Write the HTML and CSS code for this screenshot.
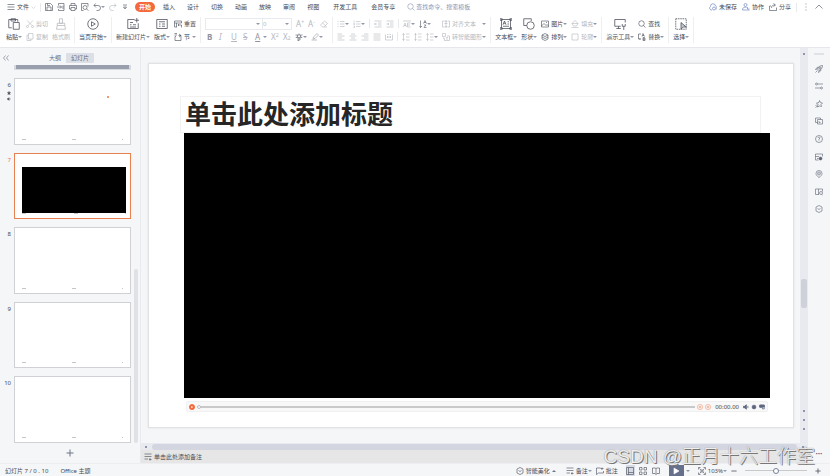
FILE: index.html
```html
<!DOCTYPE html>
<html lang="zh-CN">
<head>
    <meta charset="UTF-8">
    <meta name="viewport" content="width=device-width, initial-scale=1.0">
    <title>演示文稿</title>
    <link rel="stylesheet" href="styles.css">
</head>
<body>
    <!-- 图标 -->
    <svg class="sprite" aria-hidden="true">
        <symbol id="menu" viewBox="0 0 16 16"><path d="M1 3h14M1 8h14M1 13h14"/></symbol>
        <symbol id="chevron-down" viewBox="0 0 16 16"><path d="M2 5l6 6 6-6"/></symbol>
        <symbol id="chevron-up" viewBox="0 0 16 16"><path d="M1 11l7-7 7 7"/></symbol>
        <symbol id="save" viewBox="0 0 16 16"><path d="M1 1h10l4 4v10H1zM4 15V8h8v7M5 1v4h5"/></symbol>
        <symbol id="export" viewBox="0 0 16 16"><path d="M3 5V1h11v14H3v-3M0 8h9M6 5l3 3-3 3M12 5v7"/></symbol>
        <symbol id="print" viewBox="0 0 16 16"><path d="M4 5V1h8v4M4 12H1V5h14v7h-3M4 9h8v6H4z"/></symbol>
        <symbol id="preview" viewBox="0 0 16 16"><path d="M5 15H1V1h13v6M11 12l4 3"/><circle cx="8" cy="9" r="4"/></symbol>
        <symbol id="undo" viewBox="0 0 16 16"><path d="M5 1L2 5l4 4M2 5h8a5 5 0 0 1 0 10H7"/></symbol>
        <symbol id="redo" viewBox="0 0 16 16"><path d="M11 1l3 4-4 4M14 5H6a5 5 0 0 0 0 10h3"/></symbol>
        <symbol id="more-down" viewBox="0 0 16 16"><path d="M4 4h8M5 8h6l-3 4z"/></symbol>
        <symbol id="search" viewBox="0 0 16 16"><circle cx="7" cy="7" r="5.5"/><path d="M11 11l4 4"/></symbol>
        <symbol id="cloud" viewBox="0 0 16 16"><path d="M6 14H4a4 4 0 0 1-1-7 5 5 0 0 1 10-1 4 4 0 0 1 1 7"/><circle cx="10" cy="11" r="3"/></symbol>
        <symbol id="team" viewBox="0 0 16 16"><circle cx="7" cy="4" r="3"/><path d="M1 14c0-6 5-6 8-5M1 14h14M11 8v4h4"/></symbol>
        <symbol id="share" viewBox="0 0 16 16"><path d="M4 6H1v9h14V9M5 10c0-5 3-6 7-6M9 1l4 3-4 3"/></symbol>
        <symbol id="dots" viewBox="0 0 16 16"><path d="M8 1v2M8 7v2M8 13v2"/></symbol>
        <symbol id="paste" viewBox="0 0 16 16"><path d="M5 13H1V2h12v3M4 3V1h6v3H4zM7 6h8v9H7z"/></symbol>
        <symbol id="cut" viewBox="0 0 16 16"><path d="M2 1l10 10M14 1L4 11"/><circle cx="3" cy="13" r="2"/><circle cx="13" cy="13" r="2"/></symbol>
        <symbol id="copy" viewBox="0 0 16 16"><path d="M5 1h9v11H5zM5 4H2v11h8v-3"/></symbol>
        <symbol id="brush" viewBox="0 0 16 16"><path d="M6 1h4v6H6zM3 7h10v3H3zM3 10l-1 5h12l-1-5"/></symbol>
        <symbol id="play" viewBox="0 0 16 16"><circle cx="8" cy="8" r="7"/><path d="M6 5l5 3-5 3z"/></symbol>
        <symbol id="new-slide" viewBox="0 0 16 16"><path d="M10 2H1v12h14V7M13 0v6M10 3h6M4 6h4M4 9h2M8 9h4M4 12h8"/></symbol>
        <symbol id="layout" viewBox="0 0 16 16"><path d="M1 2h14v12H1zM4 5h8M4 8h2M8 8h4M4 11h2M8 11h4"/></symbol>
        <symbol id="reset" viewBox="0 0 16 16"><path d="M15 6V2H1v12h5M1 6h14M5 6v8M8 10h7v5M10 8l-2 2 2 2"/></symbol>
        <symbol id="section" viewBox="0 0 16 16"><path d="M1 1h5M1 4h5M4 7H2v8h12V5H9M10 2l4 3-4 3"/></symbol>
        <symbol id="eraser" viewBox="0 0 16 16"><path d="M9 2l6 5-7 7H5l-4-4zM5 6l6 5M8 14h6"/></symbol>
        <symbol id="phonetic" viewBox="0 0 16 16"><path d="M8 1v3M1 4h14M5 4v4M11 4v4M2 9h12M4 7L2 9M12 7l2 2M4 12h8M8 9v7M5 15h3"/></symbol>
        <symbol id="highlight" viewBox="0 0 16 16"><path d="M12 1l3 3-7 7-4 1 1-4zM1 14h11"/></symbol>
        <symbol id="bullets" viewBox="0 0 16 16"><path d="M1 3h2M1 8h2M1 13h2M6 3h9M6 8h9M6 13h9"/></symbol>
        <symbol id="numbers" viewBox="0 0 16 16"><path d="M2 1v4M1 7h2v2H1M1 12h2v3H1M6 3h9M6 8h9M6 13h9"/></symbol>
        <symbol id="outdent" viewBox="0 0 16 16"><path d="M1 2h14M8 6h7M8 10h7M1 14h14M6 8H1M3 6L1 8l2 2"/></symbol>
        <symbol id="indent" viewBox="0 0 16 16"><path d="M1 2h14M8 6h7M8 10h7M1 14h14M1 8h5M4 6l2 2-2 2"/></symbol>
        <symbol id="spread" viewBox="0 0 16 16"><path d="M0 2h16M1 14l3-8 3 8M2 11h4M9 6h6M9 10h5M9 14h6M9 6v8"/></symbol>
        <symbol id="sort" viewBox="0 0 16 16"><path d="M3 1v14M1 12l2 3 3-3M9 7l3-6 3 6M10 5h4M10 10h4l-4 5h5"/></symbol>
        <symbol id="align-text" viewBox="0 0 16 16"><path d="M5 2H1v12h4M11 2h4v12h-4M8 1v14M5 7h6M6 4l2-3 2 3M6 12l2 3 2-3"/></symbol>
        <symbol id="left" viewBox="0 0 16 16"><path d="M1 2h9M1 6h14M1 10h9M1 14h14"/></symbol>
        <symbol id="center" viewBox="0 0 16 16"><path d="M4 2h8M1 6h14M4 10h8M1 14h14"/></symbol>
        <symbol id="right" viewBox="0 0 16 16"><path d="M6 2h9M1 6h14M6 10h9M1 14h14"/></symbol>
        <symbol id="justify" viewBox="0 0 16 16"><path d="M1 2h14M1 6h14M1 10h14M1 14h14"/></symbol>
        <symbol id="distribute" viewBox="0 0 16 16"><path d="M1 3v11h14V3M4 3h3M9 3h3M4 8h8M6 6L4 8l2 2M10 6l2 2-2 2"/></symbol>
        <symbol id="line-gap" viewBox="0 0 16 16"><path d="M3 1v14M1 4l2-3 2 3M1 12l2 3 2-3M8 2h7M8 8h7M8 14h7"/></symbol>
        <symbol id="smart" viewBox="0 0 16 16"><path d="M1 1h6v6H1zM5 10v5h10V6h-5M8 9h4M8 12h4M3 9v3"/></symbol>
        <symbol id="textbox" viewBox="0 0 16 16"><path d="M2 2h12v12H2zM0 1h3v2H0zM13 1h3v2h-3zM0 13h3v2H0zM13 13h3v2h-3zM4 9l2-5 2 5M5 7h2M10 5h2M10 8h2M4 11h8"/></symbol>
        <symbol id="shapes" viewBox="0 0 16 16"><path d="M5 10H1V1h10v3"/><circle cx="10" cy="10" r="5"/></symbol>
        <symbol id="picture" viewBox="0 0 16 16"><path d="M1 2h14v12H1zM1 12l5-5 4 4 2-2 3 3M10 5h2"/></symbol>
        <symbol id="arrange" viewBox="0 0 16 16"><path d="M8 1l6 3-6 3-6-3zM2 8l6 3 6-3M2 12l6 3 6-3M2 4v8M14 4v8"/></symbol>
        <symbol id="fill" viewBox="0 0 16 16"><path d="M8 1l6 6-3 5H5L2 7zM2 7h12M1 15h14"/></symbol>
        <symbol id="outline" viewBox="0 0 16 16"><path d="M2 2h12v12H2z"/></symbol>
        <symbol id="screen" viewBox="0 0 16 16"><path d="M9 11H1V2h14v4M6 11v3M3 14h6M11 8v3h4V8M13 11v5"/></symbol>
        <symbol id="replace" viewBox="0 0 16 16"><path d="M6 2H1v10h4M3 10l2 2-2 2M8 7l2-6 3 6M9 5h3M10 9h3l1 2-1 1h-3zM10 12h4v3h-4z"/></symbol>
        <symbol id="select" viewBox="0 0 16 16"><path d="M1 1h14v14H1z" stroke-dasharray="2 1"/><path d="M8 6v9l3-3h4z" fill="#c4c8d0"/></symbol>
        <symbol id="collapse" viewBox="0 0 16 16"><path d="M7 3L3 8l4 5M13 3L9 8l4 5"/></symbol>
        <symbol id="plus" viewBox="0 0 16 16"><path d="M8 1v14M1 8h14"/></symbol>
        <symbol id="minus" viewBox="0 0 16 16"><path d="M1 8h14"/></symbol>
        <symbol id="star" viewBox="0 0 16 16"><path d="M8 1l2 5h5l-4 3 2 6-5-3-5 3 2-6-4-3h5z" fill="currentColor"/></symbol>
        <symbol id="speaker" viewBox="0 0 16 16"><path d="M1 6h3l5-4v12l-5-4H1z" fill="currentColor"/><path d="M13 5v6"/></symbol>
        <symbol id="rocket" viewBox="0 0 16 16"><path d="M5 8c2-5 6-7 10-7 0 4-2 8-7 10zM5 8L1 9l3-4 3-1M8 11l-1 4 4-3 1-3M1 15l4-4"/><circle cx="10" cy="6" r="2"/></symbol>
        <symbol id="sliders" viewBox="0 0 16 16"><path d="M5 4h11M0 12h11"/><circle cx="3" cy="4" r="2"/><circle cx="13" cy="12" r="2"/></symbol>
        <symbol id="motion" viewBox="0 0 16 16"><path d="M9 1l2 4 4 1-3 3 1 4-4-1-4 2 1-5-3-3 5-1zM1 12l3-3M1 15l4-3"/></symbol>
        <symbol id="windows" viewBox="0 0 16 16"><path d="M5 5h10v9H5zM5 11H1V2h10v3M8 8v3h3"/></symbol>
        <symbol id="help" viewBox="0 0 16 16"><circle cx="8" cy="8" r="7"/><path d="M6 6c0-3 5-2 4 0L8 8v2M8 11v1"/></symbol>
        <symbol id="material" viewBox="0 0 16 16"><path d="M7 14H1V2h14v5M1 7h7M4 11h3"/><circle cx="11" cy="11" r="3" fill="currentColor"/></symbol>
        <symbol id="pin" viewBox="0 0 16 16"><path d="M8 15c-4-3-6-5-6-8a6 6 0 0 1 12 0c0 3-2 5-6 8z"/><circle cx="8" cy="7" r="3"/><path d="M7 7h2"/></symbol>
        <symbol id="book-search" viewBox="0 0 16 16"><path d="M8 13H1V2h6v11M7 2h8v5M14 13l2 2"/><circle cx="12" cy="10" r="3"/></symbol>
        <symbol id="cube" viewBox="0 0 16 16"><path d="M8 1l6 3v8l-6 3-6-3V4zM5 7l3 2 3-2"/></symbol>
        <symbol id="notes" viewBox="0 0 16 16"><path d="M1 2h14M1 7h14M1 12h7M12 10v5M10 13h5"/></symbol>
        <symbol id="comment" viewBox="0 0 16 16"><path d="M9 2H1v13l4-3h10V8M12 1v5M9 3h6"/></symbol>
        <symbol id="normal" viewBox="0 0 16 16"><path d="M1 1h14v14H1zM5 1v14M5 11h10"/></symbol>
        <symbol id="grid" viewBox="0 0 16 16"><path d="M1 1h5v5H1zM10 1h5v5h-5zM1 10h5v5H1zM10 10h5v5h-5z"/></symbol>
        <symbol id="book" viewBox="0 0 16 16"><path d="M8 3v12M1 2h5l2 1 2-1h5v11h-5l-2 2-2-2H1z"/></symbol>
        <symbol id="fit" viewBox="0 0 16 16"><path d="M1 5V1h4M11 1h4v4M15 11v4h-4M5 15H1v-4M3 3l3 3M13 3l-3 3M3 13l3-3M13 13l-3-3M6 6h4v4H6z"/></symbol>
        <symbol id="triangle" viewBox="0 0 16 16"><path d="M4 2l10 6-10 6z" fill="currentColor"/></symbol>
        <symbol id="record" viewBox="0 0 16 16"><circle cx="8" cy="8" r="7" fill="#f4693c" stroke="#f4693c"/><path d="M6 5l5 3-5 3z" fill="#fff" stroke="none"/></symbol>
        <symbol id="stop" viewBox="0 0 16 16"><circle cx="8" cy="8" r="7"/><path d="M6 5v6M6 8l4-3v6z"/></symbol>
        <symbol id="disc" viewBox="0 0 16 16"><circle cx="8" cy="8" r="5" fill="currentColor"/></symbol>
        <symbol id="fullscreen" viewBox="0 0 16 16"><path d="M2 3h12v10H9V9H2z"/><path d="M2 3h12v5H2z" fill="currentColor"/></symbol>
    </svg>

    <header class="topbar">
        <button class="tool"><svg class="icon"><use href="#menu"/></svg>文件<svg class="icon tiny faint"><use href="#chevron-down"/></svg></button>
        <span class="sep"></span>
        <div class="quick">
            <button class="tool" aria-label="保存"><svg class="icon"><use href="#save"/></svg></button>
            <button class="tool" aria-label="输出"><svg class="icon"><use href="#export"/></svg></button>
            <button class="tool" aria-label="打印"><svg class="icon"><use href="#print"/></svg></button>
            <button class="tool" aria-label="预览"><svg class="icon"><use href="#preview"/></svg></button>
            <button class="tool caret" aria-label="撤销"><svg class="icon"><use href="#undo"/></svg></button>
            <button class="tool off" aria-label="恢复"><svg class="icon"><use href="#redo"/></svg></button>
            <button class="tool" aria-label="自定义"><svg class="icon"><use href="#more-down"/></svg></button>
        </div>
        <nav class="tabs">
            <button class="tab active">开始</button>
            <button class="tab">插入</button>
            <button class="tab">设计</button>
            <button class="tab">切换</button>
            <button class="tab">动画</button>
            <button class="tab">放映</button>
            <button class="tab">审阅</button>
            <button class="tab">视图</button>
            <button class="tab wide">开发工具</button>
            <button class="tab wide">会员专享</button>
        </nav>
        <label class="search"><svg class="icon"><use href="#search"/></svg><input type="text" aria-label="查找" placeholder="查找命令、搜索模板"></label>
        <div class="account">
            <button class="tool"><svg class="icon blue"><use href="#cloud"/></svg>未保存</button>
            <button class="tool"><svg class="icon blue"><use href="#team"/></svg>协作</button>
            <button class="tool"><svg class="icon"><use href="#share"/></svg>分享</button>
            <span class="sep"></span>
            <button class="tool" aria-label="更多"><svg class="icon"><use href="#dots"/></svg></button>
            <button class="tool" aria-label="收起"><svg class="icon"><use href="#chevron-up"/></svg></button>
        </div>
    </header>

    <section class="ribbon">
        <div class="group">
            <button class="big"><svg class="icon large"><use href="#paste"/></svg><span class="caret">粘贴</span></button>
            <div class="stack">
                <button class="tool off"><svg class="icon"><use href="#cut"/></svg>剪切</button>
                <button class="tool off"><svg class="icon"><use href="#copy"/></svg>复制</button>
            </div>
            <button class="big off"><svg class="icon large"><use href="#brush"/></svg><span>格式刷</span></button>
        </div>
        <div class="group">
            <button class="big"><svg class="icon large"><use href="#play"/></svg><span class="caret">当页开始</span></button>
        </div>
        <div class="group">
            <button class="big"><svg class="icon large"><use href="#new-slide"/></svg><span class="caret">新建幻灯片</span></button>
            <button class="big"><svg class="icon large"><use href="#layout"/></svg><span class="caret">版式</span></button>
            <div class="stack">
                <button class="tool"><svg class="icon"><use href="#reset"/></svg>重置</button>
                <button class="tool caret"><svg class="icon"><use href="#section"/></svg>节</button>
            </div>
        </div>
        <div class="group off">
            <div class="stack">
                <div class="row">
                    <div class="fonts">
                        <span class="pick caret"><select class="font-name" aria-label="字体"><option></option></select></span>
                        <span class="pick caret"><select class="font-size" aria-label="字号"><option>0</option></select></span>
                    </div>
                    <button class="tool letter" aria-label="增大字号">A<sup>+</sup></button>
                    <button class="tool letter" aria-label="减小字号">A<sup>-</sup></button>
                    <button class="tool" aria-label="清除格式"><svg class="icon"><use href="#eraser"/></svg></button>
                </div>
                <div class="row inset">
                    <button class="tool letter mid"><b>B</b></button>
                    <button class="tool letter"><i>I</i></button>
                    <button class="tool letter"><u>U</u></button>
                    <button class="tool letter"><s>S</s></button>
                    <button class="tool caret mid"><span class="letter"><u>A</u></span></button>
                    <button class="tool letter">X<sup>2</sup></button>
                    <button class="tool letter">X<sub>2</sub></button>
                    <button class="tool caret dark" aria-label="拼音"><svg class="icon"><use href="#phonetic"/></svg></button>
                    <button class="tool caret mid" aria-label="突出显示"><svg class="icon"><use href="#highlight"/></svg></button>
                </div>
            </div>
        </div>
        <div class="group off">
            <div class="stack">
                <div class="row">
                    <button class="tool caret" aria-label="项目符号"><svg class="icon"><use href="#bullets"/></svg></button>
                    <button class="tool caret" aria-label="编号"><svg class="icon"><use href="#numbers"/></svg></button>
                    <span class="sep"></span>
                    <button class="tool" aria-label="减少缩进"><svg class="icon"><use href="#outdent"/></svg></button>
                    <button class="tool" aria-label="增加缩进"><svg class="icon"><use href="#indent"/></svg></button>
                    <span class="sep"></span>
                    <button class="tool caret" aria-label="字符间距"><svg class="icon"><use href="#spread"/></svg></button>
                    <button class="tool caret dark" aria-label="文字方向"><svg class="icon"><use href="#sort"/></svg></button>
                </div>
                <div class="row">
                    <button class="tool" aria-label="左对齐"><svg class="icon"><use href="#left"/></svg></button>
                    <button class="tool" aria-label="居中"><svg class="icon"><use href="#center"/></svg></button>
                    <button class="tool" aria-label="右对齐"><svg class="icon"><use href="#right"/></svg></button>
                    <button class="tool" aria-label="两端对齐"><svg class="icon"><use href="#justify"/></svg></button>
                    <button class="tool" aria-label="分散对齐"><svg class="icon"><use href="#distribute"/></svg></button>
                    <span class="sep"></span>
                    <button class="tool" aria-label="增加行距"><svg class="icon"><use href="#line-gap"/></svg></button>
                    <button class="tool" aria-label="减少行距"><svg class="icon"><use href="#line-gap"/></svg></button>
                    <button class="tool caret" aria-label="行距"><svg class="icon"><use href="#line-gap"/></svg></button>
                </div>
            </div>
            <div class="stack">
                <button class="tool caret"><svg class="icon"><use href="#align-text"/></svg>对齐文本</button>
                <button class="tool caret"><svg class="icon"><use href="#smart"/></svg>转智能图形</button>
            </div>
        </div>
        <div class="group">
            <button class="big"><svg class="icon large"><use href="#textbox"/></svg><span class="caret">文本框</span></button>
            <button class="big"><svg class="icon large"><use href="#shapes"/></svg><span class="caret">形状</span></button>
            <div class="stack">
                <button class="tool caret"><svg class="icon"><use href="#picture"/></svg>图片</button>
                <button class="tool caret"><svg class="icon"><use href="#arrange"/></svg>排列</button>
            </div>
            <div class="stack off">
                <button class="tool caret"><svg class="icon"><use href="#fill"/></svg>填充</button>
                <button class="tool caret"><svg class="icon"><use href="#outline"/></svg>轮廓</button>
            </div>
        </div>
        <div class="group">
            <button class="big"><svg class="icon large"><use href="#screen"/></svg><span class="caret">演示工具</span></button>
            <div class="stack">
                <button class="tool"><svg class="icon"><use href="#search"/></svg>查找</button>
                <button class="tool caret"><svg class="icon"><use href="#replace"/></svg>替换</button>
            </div>
        </div>
        <div class="group">
            <button class="big"><svg class="icon large"><use href="#select"/></svg><span class="caret">选择</span></button>
        </div>
    </section>

    <main class="workspace">
        <aside class="slides">
            <div class="slides-head">
                <button class="tool" aria-label="收起窗格"><svg class="icon"><use href="#collapse"/></svg></button>
                <button class="view-tab">大纲</button>
                <button class="view-tab current">幻灯片</button>
            </div>
            <div class="slides-body">
                <div class="slide-tail"></div>
                <ol class="thumbs">
                    <li class="thumb-row">
                        <span class="number">6<svg class="icon mini"><use href="#star"/></svg><svg class="icon mini"><use href="#speaker"/></svg></span>
                        <div class="thumb"><span class="dot"></span><div class="marks"><i></i><i></i><i></i></div></div>
                    </li>
                    <li class="thumb-row chosen">
                        <span class="number">7</span>
                        <div class="thumb"><div class="thumb-video"></div><div class="marks"><i></i><i></i><i></i></div></div>
                    </li>
                    <li class="thumb-row">
                        <span class="number">8</span>
                        <div class="thumb"><div class="marks"><i></i><i></i><i></i></div></div>
                    </li>
                    <li class="thumb-row">
                        <span class="number">9</span>
                        <div class="thumb"><div class="marks"><i></i><i></i><i></i></div></div>
                    </li>
                    <li class="thumb-row">
                        <span class="number">10</span>
                        <div class="thumb"><div class="marks"><i></i><i></i><i></i></div></div>
                    </li>
                </ol>
                <div class="slides-scroll"></div>
            </div>
            <button class="add" aria-label="新建幻灯片"><svg class="icon"><use href="#plus"/></svg></button>
        </aside>

        <div class="editor">
            <div class="stage">
                <div class="canvas">
                    <article class="slide">
                        <h1 class="slide-title">单击此处添加标题</h1>
                        <div class="video"></div>
                        <div class="player">
                            <button class="tool" aria-label="播放"><svg class="icon small"><use href="#record"/></svg></button>
                            <input class="seek" type="range" min="0" max="100" value="0" aria-label="进度">
                            <button class="tool orange" aria-label="后退"><svg class="icon small"><use href="#stop"/></svg></button>
                            <button class="tool orange" aria-label="前进"><svg class="icon small"><use href="#stop"/></svg></button>
                            <span class="time">00:00.00</span>
                            <button class="tool" aria-label="音量"><svg class="icon small"><use href="#speaker"/></svg></button>
                            <button class="tool" aria-label="设置"><svg class="icon small"><use href="#disc"/></svg></button>
                            <button class="tool" aria-label="全屏"><svg class="icon small"><use href="#fullscreen"/></svg></button>
                        </div>
                    </article>
                </div>
                <div class="v-scroll">
                    <span class="arrow"></span>
                    <span class="v-thumb"></span>
                    <span class="arrow"></span>
                    <span class="arrow"></span>
                    <span class="arrow"></span>
                </div>
            </div>
            <div class="h-scroll"><span class="arrow"></span><span class="h-thumb"></span><span class="arrow"></span></div>
            <label class="notes"><svg class="icon"><use href="#notes"/></svg><input type="text" aria-label="备注" placeholder="单击此处添加备注"></label>
        </div>

        <aside class="side">
            <span class="grip"></span>
            <div class="side-tools">
                <button class="tool" aria-label="美化"><svg class="icon"><use href="#rocket"/></svg></button>
                <button class="tool" aria-label="属性"><svg class="icon"><use href="#sliders"/></svg></button>
                <button class="tool" aria-label="动画"><svg class="icon"><use href="#motion"/></svg></button>
                <button class="tool" aria-label="切换"><svg class="icon"><use href="#windows"/></svg></button>
                <button class="tool" aria-label="帮助"><svg class="icon"><use href="#help"/></svg></button>
                <button class="tool" aria-label="素材"><svg class="icon"><use href="#material"/></svg></button>
                <button class="tool" aria-label="位置"><svg class="icon"><use href="#pin"/></svg></button>
                <button class="tool" aria-label="查询"><svg class="icon"><use href="#book-search"/></svg></button>
                <button class="tool" aria-label="模型"><svg class="icon"><use href="#cube"/></svg></button>
            </div>
            <span class="side-more">•••</span>
        </aside>
    </main>

    <footer class="status">
        <span class="page-count">幻灯片 7 / 0 . 10</span>
        <span class="theme">Office 主题</span>
        <div class="status-tools">
            <button class="tool caret up beautify"><svg class="icon"><use href="#cube"/></svg>智能美化</button>
            <button class="tool caret"><svg class="icon"><use href="#notes"/></svg>备注</button>
            <button class="tool"><svg class="icon"><use href="#comment"/></svg>批注</button>
            <div class="views">
                <button class="tool pressed" aria-label="普通视图"><svg class="icon"><use href="#normal"/></svg></button>
                <button class="tool" aria-label="浏览视图"><svg class="icon"><use href="#grid"/></svg></button>
                <button class="tool" aria-label="阅读视图"><svg class="icon"><use href="#book"/></svg></button>
            </div>
            <button class="start caret" aria-label="放映"><span class="start-box"><svg class="icon"><use href="#triangle"/></svg></span></button>
            <button class="tool caret"><svg class="icon"><use href="#fit"/></svg>103%</button>
            <div class="zoom">
                <button class="tool" aria-label="缩小"><svg class="icon small"><use href="#minus"/></svg></button>
                <input class="zoom-range" type="range" min="0" max="100" value="50" aria-label="缩放">
                <button class="tool" aria-label="放大"><svg class="icon small"><use href="#plus"/></svg></button>
            </div>
        </div>
    </footer>

    <div class="watermark">CSDN @正月十六工作室</div>
</body>
</html>
```
FILE: styles.css
```css
* {
    box-sizing: border-box;
}

body {
    margin: 0;
    height: 100vh;
    display: flex;
    flex-direction: column;
    overflow: hidden;
    font-family: "Noto Sans", "Noto Sans CJK SC", sans-serif;
    font-size: 6px;
    line-height: 8px;
    color: #454a55;
    background-color: #f5f6f8;
}

button,
input,
select {
    margin: 0;
    padding: 0;
    border: none;
    background: none;
    font: inherit;
    color: inherit;
    white-space: nowrap;
}

.sprite {
    display: none;
}

/* 图标大小 */
.icon {
    width: 8px;
    height: 8px;
    flex: none;
    fill: none;
    stroke: currentColor;
    stroke-width: 1.2;
    overflow: visible;
}

.large {
    width: 12px;
    height: 12px;
    stroke-width: 1;
}

.small {
    width: 6px;
    height: 6px;
    stroke-width: 2;
}

.tiny {
    width: 5px;
    height: 5px;
}

.mini {
    width: 4px;
    height: 4px;
}

.blue {
    color: #5a75b8;
}

.tool {
    display: flex;
    align-items: center;
    gap: 2px;
}

/* 下拉小三角 */
.caret::after {
    content: "";
    display: inline-block;
    flex: none;
    border: solid transparent;
    border-width: 2px 2px 0;
    border-top-color: #9298a8;
    vertical-align: middle;
}

.tool.caret::after {
    margin-left: auto;
}

.tool.caret {
    gap: 0;
}

.tool.caret .icon {
    margin-right: 2px;
}

.row .tool.caret .icon,
.quick .tool.caret .icon {
    margin-right: 0;
}

.caret.up::after {
    border-width: 0 2px 2px;
    border-bottom-color: #6c7488;
}

.off {
    color: #b4b7be;
}

.mid {
    color: #8f939d;
}

.dark {
    color: #555a68;
}

.faint {
    color: #a5a9b3;
}

.sep {
    width: 1px;
    height: 9px;
    background-color: #e8e9ec;
}

/* 顶部菜单 */
.topbar {
    display: flex;
    align-items: center;
    height: 14px;
    padding: 0 7px;
    background-color: #fff;
}

.topbar > .sep {
    margin: 0 4px;
}

.quick,
.account {
    display: flex;
    align-items: center;
    gap: 4px;
}

.account {
    margin-left: auto;
    gap: 5px;
}

.tabs {
    display: flex;
    gap: 12px;
    margin-left: 10px;
}

.tab.active {
    margin: 0 -4px;
    padding: 1px 4px;
    border-radius: 5px;
    background-color: #f4693c;
    color: #fff;
    font-weight: bold;
}

.wide {
    margin-left: 2px;
}

.search {
    display: flex;
    align-items: center;
    gap: 1px;
    margin-left: 12px;
    color: #8a96b5;
}

.search input {
    width: 64px;
}

input::placeholder {
    color: inherit;
    opacity: 1;
}

/* 功能区 */
.ribbon {
    display: flex;
    height: 34px;
    padding: 3px 2px 4px;
    background-color: #fff;
    border-bottom: 1px solid #e6e7ea;
}

.group {
    display: flex;
    gap: 4px;
    padding: 0 4px;
    border-right: 1px solid #eeeff1;
}

.big {
    display: grid;
    grid-template-rows: 13px 13px;
    place-items: center;
}

.stack {
    display: grid;
    grid-template-rows: 13px 13px;
}

.row {
    display: flex;
    align-items: center;
    gap: 4px;
}

.row .tool {
    width: 8px;
}

.row .tool.caret {
    width: 12px;
}

.inset {
    padding-left: 2px;
}

.letter {
    gap: 0;
    font-size: 8px;
}

.letter sup,
.letter sub {
    font-size: 5px;
    line-height: 5px;
}

.letter sup {
    align-self: flex-start;
}

.letter sub {
    align-self: flex-end;
}

.fonts {
    display: flex;
    border: 1px solid #e9eaed;
}

.pick {
    display: flex;
    align-items: center;
    height: 10px;
    padding-right: 2px;
}

.pick + .pick {
    border-left: 1px solid #e9eaed;
}

.pick select {
    appearance: none;
}

.font-name {
    width: 50px;
}

.font-size {
    width: 22px;
}

/* 主体 */
.workspace {
    display: flex;
    flex: 1;
    min-height: 0;
}

.slides {
    display: flex;
    flex-direction: column;
    width: 17%;
    border-right: 1px solid #e8eaee;
}

.slides-head {
    display: flex;
    align-items: center;
    height: 17px;
    padding: 3px 2px 0;
    color: #666d7d;
}

.view-tab {
    padding: 1px 5px;
}

.slides-head .tool + .view-tab {
    margin-left: auto;
}

.view-tab.current {
    margin-right: 44px;
    border-radius: 1px;
    background-color: #dcdfe6;
}

.slides-body {
    position: relative;
    display: flex;
    flex: 1;
    flex-direction: column;
    gap: 8px;
    padding-right: 9px;
}

.slide-tail {
    height: 5px;
    margin-left: 14px;
    border: solid #d6d9de;
    border-width: 0 2px 1px;
    background-color: #9a9fae;
}

.thumbs {
    display: flex;
    flex: 1;
    flex-direction: column;
    gap: 8px;
    margin: 0;
    padding: 0;
    list-style: none;
}

.thumb-row {
    display: flex;
    flex: 1;
}

.number {
    display: flex;
    flex-direction: column;
    align-items: flex-end;
    gap: 2px;
    width: 14px;
    padding: 3px 3px 0 0;
}

.thumb {
    position: relative;
    display: flex;
    flex: 1;
    flex-direction: column;
    justify-content: flex-end;
    padding: 0 7px 4px;
    border: 1px solid #cfd1d4;
    background-color: #fff;
}

.chosen .number {
    color: #e8804f;
}

.chosen .thumb {
    padding: 13px 4px 4px 7px;
    border-color: #e8804f;
}

.thumb-video {
    flex: 1;
    background-color: #000;
}

.marks {
    display: flex;
    justify-content: space-between;
}

.marks i {
    width: 4px;
    height: 1px;
    background-color: #c5c6ca;
}

.marks i:last-child {
    width: 1px;
}

.dot {
    position: absolute;
    top: 26%;
    left: 80%;
    width: 2px;
    height: 2px;
    background-color: #ee9a72;
}

.slides-scroll {
    position: absolute;
    right: 2px;
    bottom: 0;
    width: 4px;
    height: 46%;
    border-radius: 2px;
    background-color: #dfe1e4;
}

.add {
    display: flex;
    justify-content: center;
    align-items: center;
    height: 20px;
    color: #6c7488;
}

.add .icon {
    stroke-width: 2;
}

/* 编辑区 */
.editor {
    display: flex;
    flex: 1;
    flex-direction: column;
    min-width: 0;
}

.stage {
    display: flex;
    flex: 1;
}

.canvas {
    display: flex;
    flex: 1;
    padding: 15px 6px 15px 7px;
}

.slide {
    display: flex;
    flex: 1;
    flex-direction: column;
    padding: 32px 23px 15px 35px;
    border: 1px solid #e1e2e4;
    background-color: #fff;
    box-shadow: 0 0 2px #dddfe2;
}

.slide-title {
    margin: 0 9px 0 -4px;
    padding: 0 4px;
    border: 1px solid #f2f2f3;
    font-size: 26px;
    font-weight: bold;
    line-height: 35px;
    color: #262626;
}

.video {
    flex: 1;
    background-color: #000;
}

.player {
    display: flex;
    align-items: center;
    gap: 2px;
    height: 11px;
    margin: 3px 2px 0;
    padding: 0 2px;
    border: 1px solid #f0f0f0;
    border-radius: 2px;
    background-color: #f8f8f8;
    color: #5c6580;
}

.orange {
    color: #f29472;
}

.orange .icon {
    stroke-width: 1.4;
}

.time {
    padding: 0 2px;
    color: #444;
}

.seek,
.zoom-range {
    appearance: none;
    flex: 1;
    min-width: 0;
    height: 2px;
    background-color: #c9c9c9;
}

.seek::-webkit-slider-thumb,
.zoom-range::-webkit-slider-thumb {
    appearance: none;
    width: 4px;
    height: 4px;
    border: 1px solid #c0c0c0;
    border-radius: 50%;
    background-color: #fff;
}

.v-scroll {
    display: flex;
    flex-direction: column;
    align-items: center;
    gap: 7px;
    width: 8px;
    padding: 5px 0 13px;
    background-color: #e8eaf0;
}

.v-thumb {
    width: 6px;
    height: 29px;
    margin: auto 0 95px;
    border-radius: 2px;
    background-color: #ced1da;
}

.arrow {
    width: 2px;
    height: 2px;
    background-color: #8d96ae;
}

.h-scroll {
    display: flex;
    align-items: center;
    gap: 5px;
    height: 7px;
    padding: 0 4px;
    background-color: #e8eaf0;
}

.h-thumb {
    flex: 1;
    height: 6px;
    border-radius: 3px;
    background-color: #d3d6e0;
}

.notes {
    display: flex;
    align-items: center;
    gap: 2px;
    height: 13px;
    padding: 0 3px;
    background-color: #e6e6e6;
}

.notes input {
    flex: 1;
}

/* 右侧工具栏 */
.side {
    display: flex;
    flex-direction: column;
    align-items: center;
    width: 22px;
    padding-top: 5px;
    color: #5c6270;
}

.grip {
    width: 10px;
    height: 2px;
    background-color: #e0e2e6;
}

.side-tools {
    display: flex;
    flex-direction: column;
    height: 158px;
    margin-top: 5px;
}

.side-tools .tool {
    flex: 1;
}

.side-more {
    margin-top: auto;
    padding-bottom: 5px;
    color: #5c6580;
}

/* 状态栏 */
.status {
    display: flex;
    align-items: center;
    height: 13px;
    padding: 1px 9px 0 5px;
    border-top: 1px solid #eceef1;
}

.theme {
    margin-left: 12px;
}

.status-tools {
    display: flex;
    align-items: center;
    gap: 4px;
    margin-left: auto;
}

.beautify {
    width: 40px;
    margin-right: 6px;
}

.views {
    display: flex;
    gap: 4px;
    margin: 0 4px;
}

.views .tool {
    justify-content: center;
    width: 9px;
    height: 11px;
}

.views .pressed {
    background-color: #d6dae4;
}

.start {
    display: flex;
    align-items: center;
    gap: 2px;
    margin-right: 4px;
}

.start-box {
    display: flex;
    justify-content: center;
    align-items: center;
    width: 15px;
    height: 12px;
    background-color: #66708c;
    color: #fff;
}

.zoom {
    display: flex;
    align-items: center;
    gap: 8px;
    width: 90px;
}

.zoom-range {
    height: 1px;
}

.zoom-range::-webkit-slider-thumb {
    width: 6px;
    height: 6px;
    border-color: #767f96;
}

/* 水印浮在页面上 */
.watermark {
    position: absolute;
    right: 15px;
    bottom: 7px;
    font-family: "Liberation Sans", "Noto Sans CJK SC", sans-serif;
    font-size: 19px;
    font-weight: 300;
    line-height: 24px;
    color: #eee;
    text-shadow: 1px 1px 0 #777, 0 0 1px #777;
    pointer-events: none;
}
```
